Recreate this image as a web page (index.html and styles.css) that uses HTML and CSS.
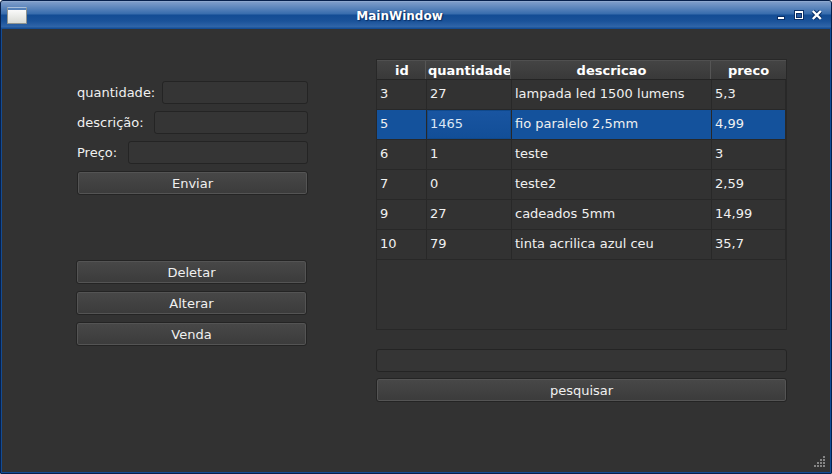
FILE: index.html
```html
<!DOCTYPE html>
<html lang="pt">
<head>
<meta charset="utf-8">
<title>MainWindow</title>
<link rel="stylesheet" href="styles.css">
</head>
<body>
<div class="window">
  <header class="titlebar">
    <span class="app-icon"></span>
    <h1 class="title">MainWindow</h1>
    <svg class="controls" width="50" height="16" viewBox="0 0 50 16" shape-rendering="crispEdges">
      <path fill="#0a2f66" d="M1 8h8v4H1zM18 2h10v10H18z"/>
      <path fill="#fff" d="M2 9h6v2H2z"/>
      <path fill="#2a5a9f" d="M21 6h4v3h-4z"/>
      <path fill="#fff" fill-rule="evenodd" d="M19 3h8v8h-8zM20 5v5h6V5z"/>
      <g shape-rendering="auto" fill="none">
        <path stroke="#0a2f66" stroke-width="4.4" d="M37 3.2l7.6 7.6M44.6 3.2l-7.6 7.6"/>
        <path stroke="#fff" stroke-width="2.4" d="M36.8 3l8 8M44.8 3l-8 8"/>
      </g>
    </svg>
  </header>
  <main class="content">
    <section class="left">
      <form class="form">
        <label class="field"><span class="name-qty">quantidade:</span><input type="text"></label>
        <label class="field"><span class="name-desc">descrição:</span><input type="text"></label>
        <label class="field"><span class="name-price">Preço:</span><input type="text"></label>
        <button type="button">Enviar</button>
      </form>
      <div class="actions">
        <button type="button">Deletar</button>
        <button type="button">Alterar</button>
        <button type="button">Venda</button>
      </div>
    </section>
    <section class="right">
      <div class="table">
        <div class="row head"><span>id</span><span class="tight">quantidade</span><span>descricao</span><span>preco</span></div>
        <div class="row"><span>3</span><span>27</span><span>lampada led 1500 lumens</span><span>5,3</span></div>
        <div class="row selected"><span>5</span><span class="current">1465</span><span>fio paralelo 2,5mm</span><span>4,99</span></div>
        <div class="row"><span>6</span><span>1</span><span>teste</span><span>3</span></div>
        <div class="row"><span>7</span><span>0</span><span>teste2</span><span>2,59</span></div>
        <div class="row"><span>9</span><span>27</span><span>cadeados 5mm</span><span>14,99</span></div>
        <div class="row"><span>10</span><span>79</span><span>tinta acrilica azul ceu</span><span>35,7</span></div>
      </div>
      <input class="search" type="text">
      <button type="button">pesquisar</button>
    </section>
  </main>
  <svg class="grip" width="12" height="12" viewBox="0 0 12 12" shape-rendering="crispEdges">
    <path fill="#858585" d="M9 0h2v2H9zM6 3h2v2H6zM9 3h2v2H9zM3 6h2v2H3zM6 6h2v2H6zM9 6h2v2H9zM0 9h2v2H0zM3 9h2v2H3zM6 9h2v2H6zM9 9h2v2H9z"/>
  </svg>
</div>
</body>
</html>
```
FILE: styles.css
```css
* { box-sizing: border-box; }
body {
  margin: 0;
  background: #fff;
  color: #f0f0f0;
  font: 13px/16px "DejaVu Sans", sans-serif;
}
.window {
  position: relative;
  width: 832px;
  height: 474px;
  border: 1px solid #06204c;
  border-radius: 3px 3px 1px 1px;
  overflow: hidden;
  background: #323232;
}
.titlebar {
  display: flex;
  align-items: center;
  height: 28px;
  padding: 0 5px 0 6px;
  background: linear-gradient(#9db4d5 0, #7d9cc9 1px, #376cad 13px, #134c94 14px, #1a5299 20px, #3166a9 26px, #134c94 27px);
}
.app-icon {
  width: 20px;
  height: 17px;
  margin-top: 1px;
  border: 1px solid #8e938f;
  border-top-color: #a9bfdb;
  border-radius: 1px;
  background: linear-gradient(#5480b8 0, #5480b8 2px, #fafafa 2px, #d9dbd5) padding-box;
}
.title {
  flex: 1;
  margin: 1px 0 0 -4px;
  text-align: center;
  font-size: 12px;
  color: #fff;
  text-shadow: 1px 1px 1px #0a2f66, 0 0 1px #0a2f66;
}
.controls { margin-top: 2px; }
.content {
  display: flex;
  justify-content: space-between;
  height: 444px;
  padding: 30px 43px 0 74px;
  border: solid #134c94;
  border-width: 0 1px 1px;
}
.left { width: 232px; padding-top: 22px; }
.form { display: flex; flex-direction: column; gap: 7px; margin-left: 1px; }
.field { display: flex; align-items: center; height: 23px; }
.field input { flex: 1; min-width: 0; }
.name-qty { width: 85px; }
.name-desc { width: 77px; }
.name-price { width: 51px; }
input {
  height: 23px;
  padding: 0 4px;
  border: 1px solid #242424;
  border-radius: 3px;
  background: #353535;
  color: inherit;
  font: inherit;
  outline: none;
}
button {
  display: block;
  width: 100%;
  height: 24px;
  padding: 1px 0 0;
  border: 1px solid #242424;
  border-radius: 3px;
  background: linear-gradient(#484848, #3b3b3b);
  box-shadow: inset 0 0 0 1px #545454;
  color: inherit;
  font: inherit;
}
.actions { display: flex; flex-direction: column; gap: 7px; width: 231px; margin-top: 65px; }
.right { width: 411px; }
.table { height: 271px; border: 1px solid #282828; }
.row {
  display: grid;
  grid-template-columns: 50px 85px 200px 74px;
  height: 30px;
  line-height: 28px;
}
.row span {
  padding-left: 3px;
  border-right: 1px solid #282828;
  border-bottom: 1px solid #282828;
  white-space: nowrap;
  overflow: hidden;
}
.row.head {
  grid-template-columns: 49px 85px 200px 75px;
  height: 20px;
  color: #fff;
  font-weight: bold;
  text-align: center;
  background: linear-gradient(#444, #393939);
  border-top: 1px solid #505050;
  border-bottom: 1px solid #242424;
}
.row.head span { padding: 0 0 0 2px; border-bottom: 0; border-right-color: #555; line-height: 20px; }
.row.head .tight { text-align: left; }
.row.head span:last-child { padding: 0; border-right: 0; }
.selected span { background: #14529c; }
.selected .current {
  color: #dbe7f5;
  background: linear-gradient(#1955a1, #124e97);
  box-shadow: inset 0 0 0 1px #10498c;
}
.search { display: block; width: 411px; margin: 19px 0 6px; }
.grip { position: absolute; right: 5px; bottom: 5px; }
```
